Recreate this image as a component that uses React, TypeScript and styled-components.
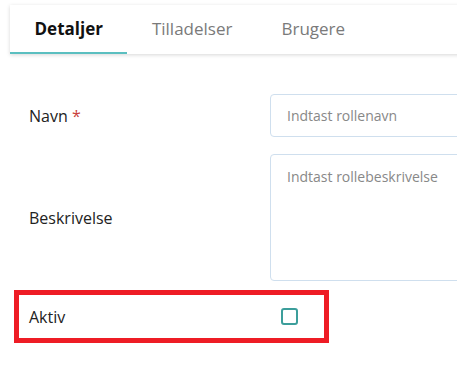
import styled, { createGlobalStyle } from "styled-components";

const GlobalStyle = createGlobalStyle`
  body {
    margin: 0;
    font-family: "Open Sans", "Liberation Sans", sans-serif;
    background: #fff;
    overflow: hidden;
  }
`;

const App = () => {
  return (
    <>
      <GlobalStyle />
      <Side>
        <Faner>
          <Fane $aktiv>Detaljer</Fane>
          <Fane>Tilladelser</Fane>
          <Fane>Brugere</Fane>
        </Faner>

        <Formular>
          <Raekke>
            <Etiket>
              Navn <Stjerne>*</Stjerne>
            </Etiket>
            <Felt type="text" placeholder="Indtast rollenavn" />
          </Raekke>
          <Raekke>
            <Etiket>Beskrivelse</Etiket>
            <Tekstfelt placeholder="Indtast rollebeskrivelse" />
          </Raekke>
          <Markeret>
            <Etiket>Aktiv</Etiket>
            <Afkrydsning type="checkbox" />
          </Markeret>
        </Formular>
      </Side>
    </>
  );
};

export default App;

const Side = styled.div`
  padding: 5px 0 0 10px;
`;

const Faner = styled.div`
  display: flex;
  height: 49px;
  margin-right: -20px;
  background: #fff;
  box-shadow: 0 1px 4px rgba(0, 0, 0, 0.16);
`;

const Fane = styled.div<{ $aktiv?: boolean }>`
  display: flex;
  align-items: center;
  padding: 0 24.5px;
  font-size: 17px;
  font-weight: ${(p) => (p.$aktiv ? 700 : 400)};
  color: ${(p) => (p.$aktiv ? "#111" : "#7a7a7a")};
  border-bottom: 2px solid ${(p) => (p.$aktiv ? "#5bbfc0" : "transparent")};
  box-sizing: border-box;
`;

const Formular = styled.form`
  display: flex;
  flex-direction: column;
  gap: 17px;
  margin-top: 40px;
`;

const Raekke = styled.div`
  display: grid;
  grid-template-columns: 241px 220px;
  align-items: center;
  padding-left: 19px;
`;

const Etiket = styled.label`
  font-size: 16px;
  color: #222;
`;

const Stjerne = styled.span`
  color: #c9413b;
`;

const Felt = styled.input`
  height: 43px;
  box-sizing: border-box;
  padding: 0 16px;
  border: 1px solid #cfdfee;
  border-radius: 4px;
  font-family: inherit;
  font-size: 14px;
  outline: none;

  &::placeholder {
    color: #888;
  }
`;

const Tekstfelt = styled.textarea`
  height: 127px;
  box-sizing: border-box;
  padding: 12px 16px;
  border: 1px solid #cfdfee;
  border-radius: 4px;
  font-family: inherit;
  font-size: 14px;
  resize: none;
  outline: none;

  &::placeholder {
    color: #888;
  }
`;

const Markeret = styled.div`
  display: grid;
  grid-template-columns: 252px auto;
  align-items: center;
  width: 315px;
  height: 53px;
  box-sizing: border-box;
  margin: -8px 0 0 4px;
  padding-left: 10px;
  border: 5px solid #ee1c25;
`;

const Afkrydsning = styled.input`
  appearance: none;
  width: 17px;
  height: 17px;
  margin: 0;
  box-sizing: border-box;
  border: 2px solid #3c9e9b;
  border-radius: 3px;
  background: #fff;
`;
